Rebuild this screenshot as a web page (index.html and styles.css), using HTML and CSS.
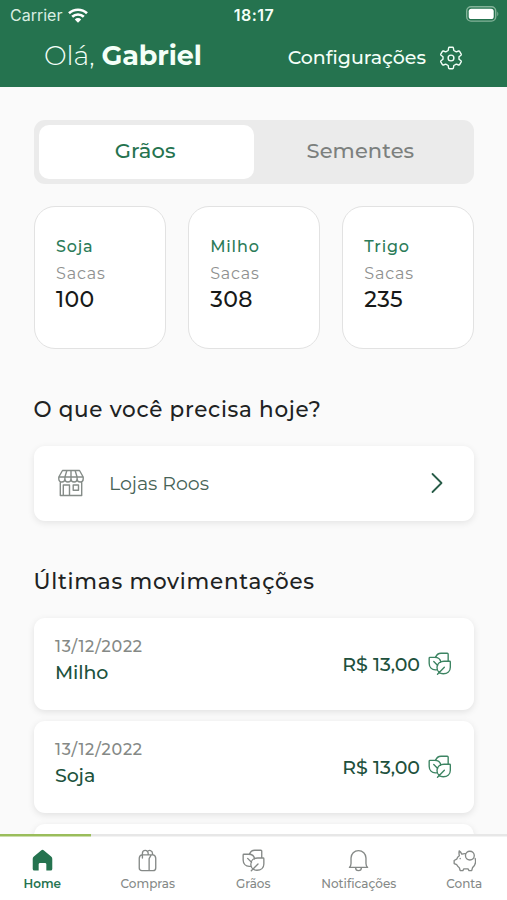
FILE: index.html
```html
<!DOCTYPE html>
<html lang="pt-BR">
<head>
<meta charset="utf-8">
<title>Home</title>
<link rel="stylesheet" href="styles.css">
</head>
<body>
<svg class="defs" aria-hidden="true">
  <symbol id="leaves" viewBox="0 0 24 24">
    <path d="M2 5.500h4.800c3.700 0 6 2.200 6.200 5M2 5.500q-.8 0-.8.8v5.200c0 4 2.800 6.600 6.300 6.700h1.700M7.800 5.400c1-2.700 2.900-4.100 5.500-4.100h6.400q.9 0 .9.900v6.800M22 9.400h-5.600c-4.300 0-7.200 2.600-7.200 6.500 0 3.700 2.700 6.300 6.400 6.300 4.300 0 7.200-2.800 7.200-6.600v-5.400q0-.8-.8-.8zM9.700 22.700l7-7.100M5.900 9.800l4 4"/>
  </symbol>
</svg>
<header class="top">
  <div class="status">
    <div class="carrier"><span>Carrier</span>
      <svg class="wifi" viewBox="0 0 20 15"><path d="M1 5.300a13 13 0 0 1 18 0M4.200 8.800a8.300 8.300 0 0 1 11.600 0"/><path class="dot" d="M6.800 11.400a4.600 4.600 0 0 1 6.400 0L10 14.700z"/></svg>
    </div>
    <time>18:17</time>
    <svg class="battery" viewBox="0 0 33 16"><rect class="shell" x=".7" y=".7" width="29" height="14.400" rx="4.300"/><rect class="level" x="2.700" y="2.700" width="25" height="10.400" rx="2.600"/><path class="cap" d="M31.300 5.500q2 2.400 0 4.800z"/></svg>
  </div>
  <div class="greeting">
    <h1><span class="hello">Olá,</span> <b>Gabriel</b></h1>
    <a class="settings"><span>Configurações</span>
      <svg class="gear" viewBox="0 0 24 24"><path d="M10.400 1.300h3.200q.7 0 .8.700l.4 2.500 2.500 1.400 2.300-.9q.7-.2 1 .3l1.600 2.800q.3.600-.2 1.100L20 10.700v2.600l2 1.500q.5.500.2 1.100l-1.600 2.800q-.3.500-1 .3l-2.300-.9-2.500 1.400-.4 2.500q-.1.700-.8.700h-3.200q-.7 0-.8-.7l-.4-2.500-2.500-1.400-2.300.9q-.7.200-1-.3l-1.600-2.800q-.3-.6.2-1.100l2-1.500v-2.600l-2-1.500q-.5-.5-.2-1.100l1.600-2.800q.3-.5 1-.3l2.300.9 2.500-1.400.4-2.500q.1-.7.800-.7z"/><circle cx="12" cy="12" r="2.900"/></svg>
    </a>
  </div>
</header>
<main>
  <div class="segment"><div class="seg active">Grãos</div><div class="seg">Sementes</div></div>
  <div class="grains">
    <div class="grain"><h3>Soja</h3><p>Sacas</p><strong>100</strong></div>
    <div class="grain"><h3>Milho</h3><p>Sacas</p><strong>308</strong></div>
    <div class="grain"><h3>Trigo</h3><p>Sacas</p><strong>235</strong></div>
  </div>
  <h2 class="need">O que você precisa hoje?</h2>
  <div class="store">
    <svg class="shop" viewBox="0 0 28 28"><path d="M5.500 1.500h17l3.700 6.500v2a3.050 3.050 0 0 1-6.100 0 3.050 3.050 0 0 1-6.100 0 3.050 3.050 0 0 1-6.100 0 3.050 3.050 0 0 1-6.100 0V8zM1.800 8h24.400M7.900 10V8l2-6.500M14 10V1.500M20.100 10V8l-2-6.500M3.300 13v13.500h21.400V13M6.300 26.500V16h6.200v10.500M16.200 16h5.300v5.300h-5.300z"/></svg>
    <span>Lojas Roos</span>
    <svg class="chevron" viewBox="0 0 14 22"><path d="M2.500 2l9 9-9 9"/></svg>
  </div>
  <h2 class="recent">Últimas movimentações</h2>
  <div class="moves">
    <div class="move"><div><time>13/12/2022</time><h3>Milho</h3></div><div class="price"><span>R$ 13,00</span><svg><use href="#leaves"/></svg></div></div>
    <div class="move"><div><time>13/12/2022</time><h3>Soja</h3></div><div class="price"><span>R$ 13,00</span><svg><use href="#leaves"/></svg></div></div>
    <div class="move"></div>
  </div>
</main>
<nav>
  <a class="tab active"><svg viewBox="0 0 24 24"><path class="house" d="M10.500 1.500q1.500-1.200 3 0L21 7.800q1.200 1 1.200 2.500v10.500q0 1.700-1.700 1.700H16v-6.500q0-1.500-1.500-1.500h-5q-1.500 0-1.500 1.500v6.500H3.500q-1.700 0-1.700-1.700V10.300q0-1.500 1.200-2.500z"/></svg><span>Home</span></a>
  <a class="tab"><svg viewBox="0 0 24 24"><path d="M6 6.200h12q2.600.8 2.600 3.600v9.900q0 2.800-2.800 2.800H6.200q-2.800 0-2.800-2.800V9.800Q3.400 7 6 6.200zM13.700 10v12.500M6.700 9.500V4.400a3 3 0 0 1 6 0v1.800M11.900 2.800a2.900 2.900 0 0 1 5.300 1.600v1.800M13.700 10l2-3.500"/></svg><span>Compras</span></a>
  <a class="tab"><svg><use href="#leaves"/></svg><span>Grãos</span></a>
  <a class="tab"><svg viewBox="0 0 24 24"><path d="M2.500 19.200h19q-1.700-1.500-1.700-4V9.500a7.800 7.800 0 0 0-15.600 0v5.700q0 2.500-1.700 4zM9 19.500a3 3 0 0 0 6 0"/></svg><span>Notificações</span></a>
  <a class="tab"><svg viewBox="0 0 24 24"><path d="M13 4.900q-2.300-.1-3.800.5Q8.300 3 6.500 2q-.5 2.500.1 5Q4.700 8.300 3.800 10.600L1.200 12v3.200l2.700 1.200q1 1.900 2.700 3.100l.9 3h2.800l1-1.700h4.400l1 1.700h2.800l.9-3.100q2.700-2 3.100-5.400.2-2.200-.4-4.200M7.500 9.700v.4"/><circle cx="17.600" cy="6.900" r="4.600"/></svg><span>Conta</span></a>
</nav>
</body>
</html>
```
FILE: styles.css
```css
* { box-sizing: border-box; }
body, h1, h2, h3, p { margin: 0; }
body {
  width: 507px; height: 900px; overflow: hidden;
  display: flex; flex-direction: column;
  background: #fafafa; color: #202222;
  font-family: Montserrat, Inter, sans-serif;
}
h1, h2, h3 { font-weight: 500; }
svg { fill: none; stroke: currentColor; stroke-width: 1.4; stroke-linejoin: round; stroke-linecap: round; flex: none; }
.defs { display: none; }
.top { flex: none; height: 87px; background: #25734f; color: #f4fff8; }
.status { height: 30px; display: grid; grid-template-columns: 1fr auto 1fr; align-items: center; padding: 0 9px 0 10px; line-height: 20px; font-family: Inter, sans-serif; }
.carrier { display: flex; align-items: center; gap: 6px; font-size: 16px; letter-spacing: 0; color: #d9eee2; }
.wifi { width: 20px; height: 15px; stroke-width: 2.6; stroke-linecap: butt; color: #fff; }
.wifi .dot { fill: #fff; stroke: none; }
.status time { font-size: 16px; font-weight: 600; letter-spacing: .5px; }
.battery { width: 33px; height: 16px; justify-self: end; margin: -2px -1px 0 0; }
.shell { stroke: #83b399; }
.level { fill: #fff; stroke: none; }
.cap { fill: #83b399; stroke: none; }
.greeting { display: flex; justify-content: space-between; padding: 9px 44px 0 44px; }
h1 { margin-top: 1px; font-size: 27px; line-height: 32px; font-weight: 300; white-space: nowrap; letter-spacing: -.07px; }
h1 b { font-weight: 700; }
.settings { display: flex; align-items: center; gap: 12px; height: 37px; font-size: 19px; font-weight: 500; }
.settings span { margin-right: 1px; }
.gear { width: 24px; height: 24px; }
main { flex: 1; min-height: 0; overflow: hidden; padding: 33px 33px 0 33.5px; }
.segment { display: flex; height: 64px; padding: 5px; background: #ebebeb; border-radius: 11px; }
.seg { flex: 1; display: flex; align-items: center; justify-content: center; padding: 0 2px 3px 0; font-size: 21px; font-weight: 500; letter-spacing: .1px; color: #7c807e; border-radius: 10px; }
.seg.active { background: #fff; color: #25734f; }
.grains { display: grid; grid-template-columns: repeat(3, 1fr); gap: 22px; margin-top: 22px; }
.grain { height: 143px; padding: 28.5px 20px 0 21.5px; background: #fff; border: 1px solid #e2e2e2; border-radius: 21px; }
.grain h3 { font-size: 16px; line-height: 22px; letter-spacing: .85px; color: #2b7b58; }
.grain p { margin-top: 5px; font-size: 16px; line-height: 22px; letter-spacing: .8px; color: #8f9190; }
.grain strong { display: block; margin-top: 2.5px; font-size: 22px; line-height: 26px; font-weight: 500; letter-spacing: .4px; color: #171918; }
h2 { font-size: 21.5px; line-height: 28px; letter-spacing: .7px; white-space: nowrap; }
.need { margin-top: 45.5px; }
.store { display: flex; align-items: center; height: 75px; margin-top: 23.5px; padding: 0 30px 1px 23.5px; background: #fff; border-radius: 11px; box-shadow: 0 2px 7px rgba(0,0,0,.09); font-size: 19px; letter-spacing: -.05px; color: #476357; }
.store span { flex: 1; margin-left: 24px; }
.shop { width: 28px; height: 28px; color: #858c88; }
.chevron { width: 14px; height: 22px; stroke-width: 1.8; color: #285c48; }
.recent { margin-top: 46px; letter-spacing: .75px; }
.moves { display: grid; gap: 11px; margin-top: 23px; }
.move { display: flex; justify-content: space-between; height: 92px; padding: 18px 22.5px 0 21.5px; background: #fff; border-radius: 11px; box-shadow: 0 2px 7px rgba(0,0,0,.1); }
.move time { display: block; font-size: 16px; line-height: 22px; font-weight: 500; letter-spacing: .75px; color: #858986; }
.move h3 { margin-top: 2px; font-size: 19px; line-height: 26px; letter-spacing: -.1px; color: #20523c; }
.price { display: flex; align-items: center; gap: 8px; height: 56px; font-size: 19px; font-weight: 500; letter-spacing: -.05px; color: #20503c; }
.price svg { width: 23.5px; height: 23.5px; color: #3c8462; }
nav { flex: none; display: grid; grid-template-columns: repeat(5, 105.5px); height: 66px; background: linear-gradient(90deg, #9abd5b 91px, #e7e7e7 91px) top / 100% 2.5px no-repeat #fff; overflow: hidden; }
.tab { display: flex; flex-direction: column; align-items: center; padding-top: 14.500px; font-size: 12px; line-height: 18px; font-weight: 500; color: #858987; margin-left: -21px; }
.tab svg { width: 23px; height: 23px; }
.tab span { margin-top: 3.500px; }
.tab.active { color: #25734f; font-weight: 600; }
.house { fill: currentColor; stroke: none; }
```
